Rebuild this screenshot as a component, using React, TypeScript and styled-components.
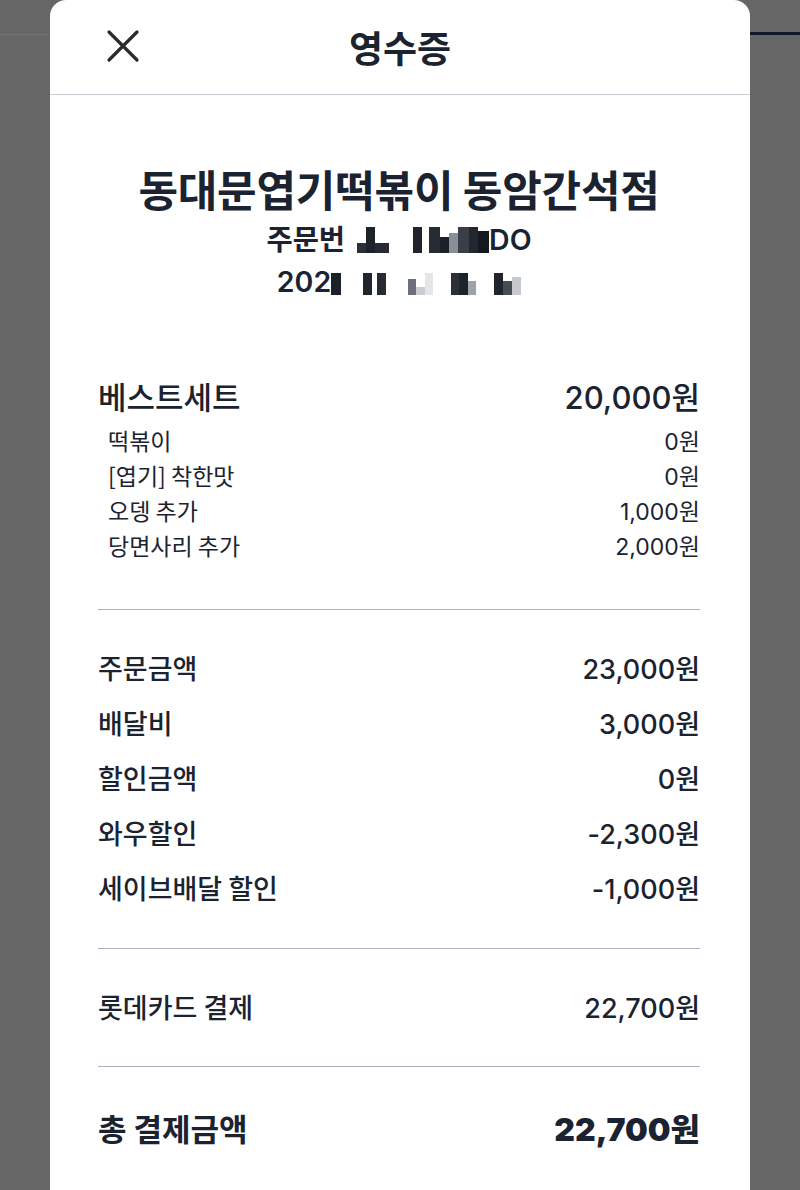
import styled, { createGlobalStyle } from "styled-components";

const GlobalStyle = createGlobalStyle`
  html, body {
    margin: 0;
    padding: 0;
    background: #666666;
  }
  body {
    font-family: "Noto Sans CJK KR", "Noto Sans", sans-serif;
    color: #1b2330;
  }
`;

const numberFont = `"Inter", "Noto Sans CJK KR", sans-serif`;

const Page = styled.div`
  position: relative;
  width: 800px;
  height: 1190px;
  overflow: hidden;
  background: #666666;
`;

const BackTopBar = styled.div`
  height: 34px;
  display: flex;
  justify-content: flex-end;
  align-items: flex-end;
  border-bottom: 1px solid #737373;
`;

const TabIndicator = styled.div`
  width: 60px;
  height: 3px;
  margin-bottom: -1px;
  background: #14162a;
`;

const Sheet = styled.div`
  position: absolute;
  top: 0;
  left: 50px;
  width: 700px;
  bottom: 0;
  background: #ffffff;
  border-radius: 16px 16px 0 0;
  display: flex;
  flex-direction: column;
`;

const Header = styled.header`
  position: relative;
  height: 94px;
  display: flex;
  align-items: center;
  justify-content: center;
  border-bottom: 1px solid #c9ced6;
`;

const CloseButton = styled.button`
  position: absolute;
  left: 54px;
  top: 27px;
  width: 38px;
  height: 38px;
  padding: 0;
  border: none;
  background: none;
  display: flex;
  align-items: center;
  justify-content: center;
`;

const Title = styled.h1`
  margin: 0;
  font-size: 37px;
  font-weight: 700;
  line-height: 94px;
  color: #1b2330;
`;

const Body = styled.div`
  padding: 0 50px 0 48px;
  display: flex;
  flex-direction: column;
`;

const StoreBlock = styled.div`
  padding-top: 67px;
  display: flex;
  flex-direction: column;
  align-items: center;
`;

const StoreName = styled.h2`
  margin: 0;
  font-size: 43px;
  font-weight: 700;
  line-height: 52px;
  letter-spacing: -0.2px;
`;

const MetaLine = styled.div<{ $gap?: number }>`
  display: flex;
  align-items: center;
  font-family: ${numberFont};
  font-size: 28.5px;
  font-weight: 600;
  line-height: 42px;
  margin-top: ${(p) => p.$gap ?? 0}px;
`;

const Mosaic = styled.span`
  display: inline-flex;
  align-items: flex-end;
  height: 26px;
`;

const Pixel = styled.span<{ $w: number; $h: number; $c: string }>`
  display: inline-block;
  width: ${(p) => p.$w}px;
  height: ${(p) => p.$h}px;
  background: ${(p) => p.$c};
`;

const Section = styled.section<{ $top: number; $bottom: number; $line?: boolean }>`
  padding: ${(p) => p.$top}px 0 ${(p) => p.$bottom}px;
  border-bottom: ${(p) => (p.$line ? "1.5px solid #a9b2be" : "none")};
`;

const Value = styled.span`
  font-family: ${numberFont};
`;

const MainItem = styled.div`
  display: flex;
  justify-content: space-between;
  align-items: center;
  height: 42px;
  font-size: 31px;
  font-weight: 500;
`;

const SubList = styled.div`
  margin-top: 6px;
  padding-left: 10px;
  display: flex;
  flex-direction: column;
`;

const SubItem = styled.div`
  display: flex;
  justify-content: space-between;
  align-items: center;
  height: 35px;
  font-size: 23px;
  font-weight: 400;
`;

const Row = styled.div<{ $h?: number }>`
  display: flex;
  justify-content: space-between;
  align-items: center;
  height: ${(p) => p.$h ?? 55}px;
  font-size: 27px;
  font-weight: 500;
`;

const TotalLabel = styled.span`
  font-size: 31px;
  font-weight: 700;
`;

const TotalValue = styled.span`
  font-family: ${numberFont};
  font-size: 32px;
  font-weight: 900;
`;

const CloseIcon = () => (
  <svg width="34" height="34" viewBox="0 0 34 34" fill="none">
    <path
      d="M3 3 L31 31 M31 3 L3 31"
      stroke="#2b2b2b"
      strokeWidth="3.2"
      strokeLinecap="round"
    />
  </svg>
);

type Px = [number, number, string];

const orderMosaic: Px[] = [
  [12, 0, "#fff"],
  [9, 10, "#2a2f38"],
  [9, 26, "#1d222b"],
  [14, 10, "#262b34"],
  [24, 0, "#fff"],
  [9, 26, "#1f242d"],
  [7, 0, "#fff"],
  [11, 26, "#262b34"],
  [9, 16, "#1b2029"],
  [9, 20, "#8a8f97"],
  [11, 26, "#3a3f47"],
  [9, 26, "#22272f"],
  [11, 22, "#14181f"],
];

const dateMosaic: Px[] = [
  [10, 22, "#1b2029"],
  [22, 0, "#fff"],
  [9, 22, "#1f242d"],
  [5, 0, "#fff"],
  [9, 22, "#262b34"],
  [22, 0, "#fff"],
  [8, 16, "#6c7179"],
  [9, 8, "#c9ccd1"],
  [8, 22, "#e4e6ea"],
  [18, 0, "#fff"],
  [8, 22, "#2a2f38"],
  [9, 22, "#1d222b"],
  [8, 14, "#9ea3aa"],
  [18, 0, "#fff"],
  [9, 22, "#1f242d"],
  [9, 14, "#484d55"],
  [9, 18, "#c5c8cd"],
];

const renderMosaic = (pixels: Px[]) => (
  <Mosaic>
    {pixels.map(([w, h, c], i) => (
      <Pixel key={i} $w={w} $h={h} $c={c} />
    ))}
  </Mosaic>
);

const options = [
  { name: "떡볶이", price: "0원" },
  { name: "[엽기] 착한맛", price: "0원" },
  { name: "오뎅 추가", price: "1,000원" },
  { name: "당면사리 추가", price: "2,000원" },
];

const summary = [
  { name: "주문금액", price: "23,000원" },
  { name: "배달비", price: "3,000원" },
  { name: "할인금액", price: "0원" },
  { name: "와우할인", price: "-2,300원" },
  { name: "세이브배달 할인", price: "-1,000원" },
];

export default function App() {
  return (
    <>
      <GlobalStyle />
      <Page>
        <BackTopBar>
          <TabIndicator />
        </BackTopBar>
        <Sheet>
          <Header>
            <CloseButton aria-label="닫기">
              <CloseIcon />
            </CloseButton>
            <Title>영수증</Title>
          </Header>
          <Body>
            <StoreBlock>
              <StoreName>동대문엽기떡볶이 동암간석점</StoreName>
              <MetaLine $gap={5}>
                주문번{renderMosaic(orderMosaic)}DO
              </MetaLine>
              <MetaLine>
                202{renderMosaic(dateMosaic)}
              </MetaLine>
            </StoreBlock>

            <Section $top={71} $bottom={47} $line>
              <MainItem>
                <span>베스트세트</span>
                <Value>20,000원</Value>
              </MainItem>
              <SubList>
                {options.map((o) => (
                  <SubItem key={o.name}>
                    <span>{o.name}</span>
                    <Value>{o.price}</Value>
                  </SubItem>
                ))}
              </SubList>
            </Section>

            <Section $top={30} $bottom={33} $line>
              {summary.map((s) => (
                <Row key={s.name}>
                  <span>{s.name}</span>
                  <Value>{s.price}</Value>
                </Row>
              ))}
            </Section>

            <Section $top={30} $bottom={32} $line>
              <Row>
                <span>롯데카드 결제</span>
                <Value>22,700원</Value>
              </Row>
            </Section>

            <Section $top={30} $bottom={0}>
              <Row $h={60}>
                <TotalLabel>총 결제금액</TotalLabel>
                <TotalValue>22,700원</TotalValue>
              </Row>
            </Section>
          </Body>
        </Sheet>
      </Page>
    </>
  );
}
